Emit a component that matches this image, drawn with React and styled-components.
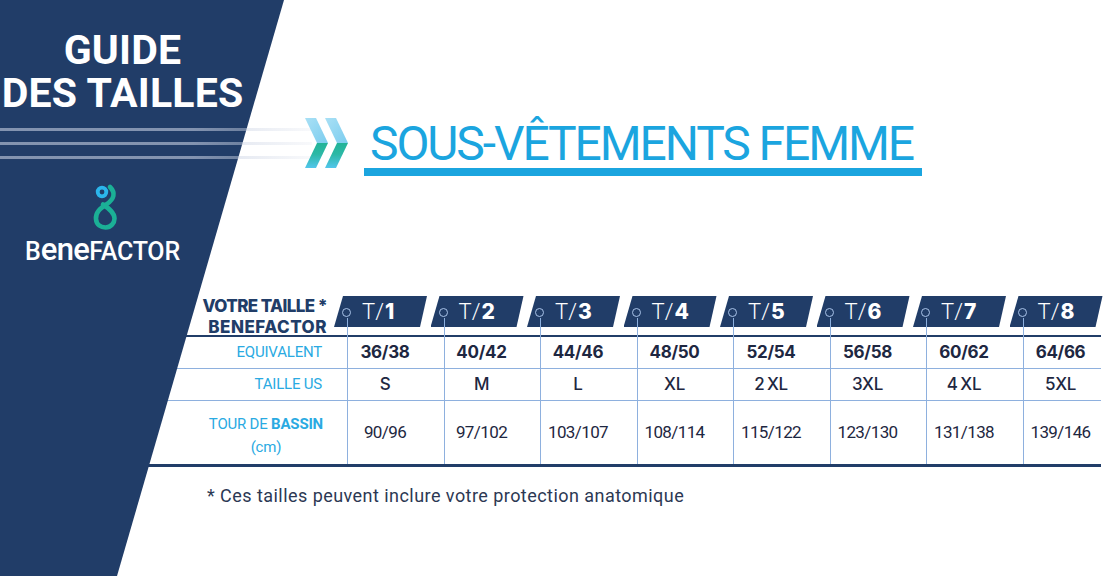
import styled, { createGlobalStyle } from 'styled-components'

const NAVY = '#213d68'
const SKY = '#1ba5df'
const LABEL = '#2aaae2'
const GRID = '#8eb0de'
const INK = '#1e2741'

const GlobalStyle = createGlobalStyle`
  html, body {
    margin: 0;
    padding: 0;
    background: #fff;
  }
  body {
    font-family: Roboto, "Liberation Sans", sans-serif;
  }
`

const Page = styled.div`
  position: relative;
  width: 1112px;
  height: 576px;
  overflow: hidden;
  background: #fff;

  &::before {
    content: '';
    position: absolute;
    top: 0;
    left: 0;
    bottom: 0;
    width: 284px;
    background: ${NAVY};
    clip-path: polygon(0 0, 284px 0, 117px 100%, 0 100%);
    z-index: 1;
  }
`

const Streaks = styled.div`
  position: absolute;
  top: 128px;
  left: 0;
  width: 312px;
  display: flex;
  flex-direction: column;
  gap: 11px;
  z-index: 2;
`

const Streak = styled.span`
  display: block;
  height: 3px;
  background: linear-gradient(
    to right,
    rgba(196, 205, 224, 0.6) 0,
    rgba(196, 205, 224, 0.6) 62%,
    rgba(226, 230, 239, 0.25) 100%
  );
`

const Top = styled.header`
  position: relative;
  z-index: 3;
  display: grid;
  grid-template-columns: 245px 1fr;
  height: 296px;
`

const Brand = styled.div`
  display: flex;
  flex-direction: column;
  padding-top: 29px;
`

const GuideTitle = styled.h1`
  margin: 0;
  color: #fff;
  font: 700 41px/43px Roboto, sans-serif;
  letter-spacing: 0.2px;
  text-align: center;
`

const Logo = styled.div`
  align-self: flex-start;
  margin: 68px 0 0 22px;
  width: 161px;
  display: flex;
  flex-direction: column;
  align-items: center;
  gap: 7px;
`

const Wordmark = styled.div`
  color: #fff;
  font: 500 25px/24px Roboto, sans-serif;
  letter-spacing: -0.2px;
  white-space: nowrap;

  span {
    font-size: 31px;
    letter-spacing: -0.6px;
  }
`

const Heading = styled.div`
  display: flex;
  align-items: flex-start;
  padding: 118px 0 0 60px;
`

const HeadingText = styled.h2`
  margin: 1px 0 0 15px;
  padding: 0 9px 0 6px;
  color: ${SKY};
  font: 400 48px/49px Roboto, sans-serif;
  letter-spacing: -2.1px;
  border-bottom: 8px solid ${SKY};
  white-space: nowrap;
`

const Table = styled.div`
  margin-left: 140px;
  width: 961px;
`

const rows = {
  head: { h: 39, rule: `2px solid ${NAVY}` },
  body: { h: 31, rule: `1px solid ${GRID}` },
  last: { h: 63, rule: `3px solid ${NAVY}` },
}

const Row = styled.div`
  display: grid;
  grid-template-columns: 207px repeat(7, 96.5px) 78px;
  height: ${p => rows[p.$kind].h}px;
  border-bottom: ${p => rows[p.$kind].rule};
`

const HeadLabel = styled.div`
  display: flex;
  flex-direction: column;
  justify-content: flex-end;
  align-items: flex-end;
  padding: 0 20px 3px 0;
  color: ${NAVY};
  font: 800 17px/21px Inter, sans-serif;
  white-space: nowrap;
`

const HeadLine = styled.span`
  letter-spacing: ${p => p.$spacing};
`

const Label = styled.div`
  display: flex;
  flex-direction: column;
  justify-content: center;
  align-items: flex-end;
  padding: ${p => (p.$tall ? '6px 24px 0 0' : '0 25px 0 0')};
  color: ${LABEL};
  font: 400 15px/23px Roboto, sans-serif;
  letter-spacing: -0.2px;

  b {
    font-weight: 700;
  }
`

const Stack = styled.span`
  display: flex;
  flex-direction: column;
  align-items: center;
`

const HeadCell = styled.div`
  position: relative;

  &::after {
    content: '';
    position: absolute;
    left: 0;
    top: 22px;
    bottom: 0;
    width: 1px;
    background: ${GRID};
  }
`

const Tab = styled.div`
  margin-left: -13px;
  width: 93px;
  height: 31px;
  display: flex;
  align-items: center;
  padding-left: 28px;
  box-sizing: border-box;
  background: ${NAVY};
  clip-path: polygon(9px 0, 100% 0, calc(100% - 7px) 100%, 0 100%);
  color: #fff;
  font: 300 22px/1 Roboto, sans-serif;

  b {
    margin-left: 1px;
    font: 800 21px/1 Inter, sans-serif;
  }
`

const Pin = styled.span`
  position: absolute;
  left: -5px;
  top: 12px;
  width: 9px;
  height: 9px;
  box-sizing: border-box;
  border: 1.3px solid #a9c3e8;
  border-radius: 50%;
  background: ${NAVY};
  z-index: 1;
`

const weights = {
  bold: `700 17px/1 Inter, sans-serif`,
  mid: `500 17px/1 Inter, sans-serif`,
  plain: `400 17px/1 Roboto, sans-serif`,
}

const Cell = styled.div`
  display: flex;
  align-items: center;
  border-left: 1px solid ${GRID};
  color: ${INK};
  font: ${p => weights[p.$weight]};
  letter-spacing: ${p => (p.$weight === 'plain' ? '-0.6px' : '-0.3px')};

  span {
    flex: 0 0 74px;
    text-align: center;
    white-space: nowrap;
  }
`

const Footnote = styled.p`
  position: relative;
  z-index: 3;
  margin: 19px 0 0 207px;
  color: #2c3853;
  font: 400 18px/20px Roboto, sans-serif;
  letter-spacing: 0.45px;
`

const Chevrons = () => (
  <svg width="44" height="50" viewBox="0 0 44 50">
    <defs>
      <linearGradient id="up" x1="0" y1="0" x2="1" y2="1">
        <stop offset="0" stopColor="#a9e0f5" />
        <stop offset="1" stopColor="#7ccdef" />
      </linearGradient>
      <linearGradient id="down" x1="0" y1="0" x2="0" y2="1">
        <stop offset="0" stopColor="#22b397" />
        <stop offset="0.45" stopColor="#2cb8a6" />
        <stop offset="1" stopColor="#53c6ec" />
      </linearGradient>
    </defs>
    {[0, 20].map(dx => (
      <g key={dx} transform={`translate(${dx} 0)`}>
        <polygon points="0,0 11,0 23,25 12,25" fill="url(#up)" />
        <polygon points="12,25 23,25 11,50 0,50" fill="url(#down)" />
      </g>
    ))}
  </svg>
)

const LogoMark = () => (
  <svg width="30" height="48" viewBox="0 0 30 48">
    <path
      d="M22 4 C28 10 26 16 19 21 C11 26 7.5 30 8 36 C8.5 42 13 44.5 17.5 44.5 C23 44.5 26.5 40 26.5 35.5 C26.5 29.5 21 25.5 15 21.5"
      fill="none"
      stroke="#1bb096"
      strokeWidth="4.6"
      strokeLinecap="round"
    />
    <circle cx="14" cy="9" r="4.3" fill="none" stroke="#2bb6ec" strokeWidth="3.8" />
  </svg>
)

const sizes = [
  { t: 1, eq: '36/38', us: 'S', cm: '90/96' },
  { t: 2, eq: '40/42', us: 'M', cm: '97/102' },
  { t: 3, eq: '44/46', us: 'L', cm: '103/107' },
  { t: 4, eq: '48/50', us: 'XL', cm: '108/114' },
  { t: 5, eq: '52/54', us: '2\u2009XL', cm: '115/122' },
  { t: 6, eq: '56/58', us: '3XL', cm: '123/130' },
  { t: 7, eq: '60/62', us: '4\u2009XL', cm: '131/138' },
  { t: 8, eq: '64/66', us: '5XL', cm: '139/146' },
]

export default function App() {
  return (
    <>
      <GlobalStyle />
      <Page>
        <Streaks>
          <Streak />
          <Streak />
          <Streak />
        </Streaks>

        <Top>
          <Brand>
            <GuideTitle>
              GUIDE
              <br />
              DES TAILLES
            </GuideTitle>
            <Logo>
              <LogoMark />
              <Wordmark>
                B<span>ene</span>FACTOR
              </Wordmark>
            </Logo>
          </Brand>
          <Heading>
            <Chevrons />
            <HeadingText>SOUS-VÊTEMENTS FEMME</HeadingText>
          </Heading>
        </Top>

        <Table>
          <Row $kind="head">
            <HeadLabel>
              <HeadLine $spacing="-0.6px">VOTRE TAILLE *</HeadLine>
              <HeadLine $spacing="0.5px">BENEFACTOR</HeadLine>
            </HeadLabel>
            {sizes.map(s => (
              <HeadCell key={s.t}>
                <Tab>
                  T/<b>{s.t}</b>
                </Tab>
                <Pin />
              </HeadCell>
            ))}
          </Row>
          <Row $kind="body">
            <Label>EQUIVALENT</Label>
            {sizes.map(s => (
              <Cell key={s.t} $weight="bold">
                <span>{s.eq}</span>
              </Cell>
            ))}
          </Row>
          <Row $kind="body">
            <Label>TAILLE US</Label>
            {sizes.map(s => (
              <Cell key={s.t} $weight="mid">
                <span>{s.us}</span>
              </Cell>
            ))}
          </Row>
          <Row $kind="last">
            <Label $tall>
              <Stack>
                <span>
                  TOUR DE <b>BASSIN</b>
                </span>
                <span>(cm)</span>
              </Stack>
            </Label>
            {sizes.map(s => (
              <Cell key={s.t} $weight="plain">
                <span>{s.cm}</span>
              </Cell>
            ))}
          </Row>
        </Table>

        <Footnote>* Ces tailles peuvent inclure votre protection anatomique</Footnote>
      </Page>
    </>
  )
}
